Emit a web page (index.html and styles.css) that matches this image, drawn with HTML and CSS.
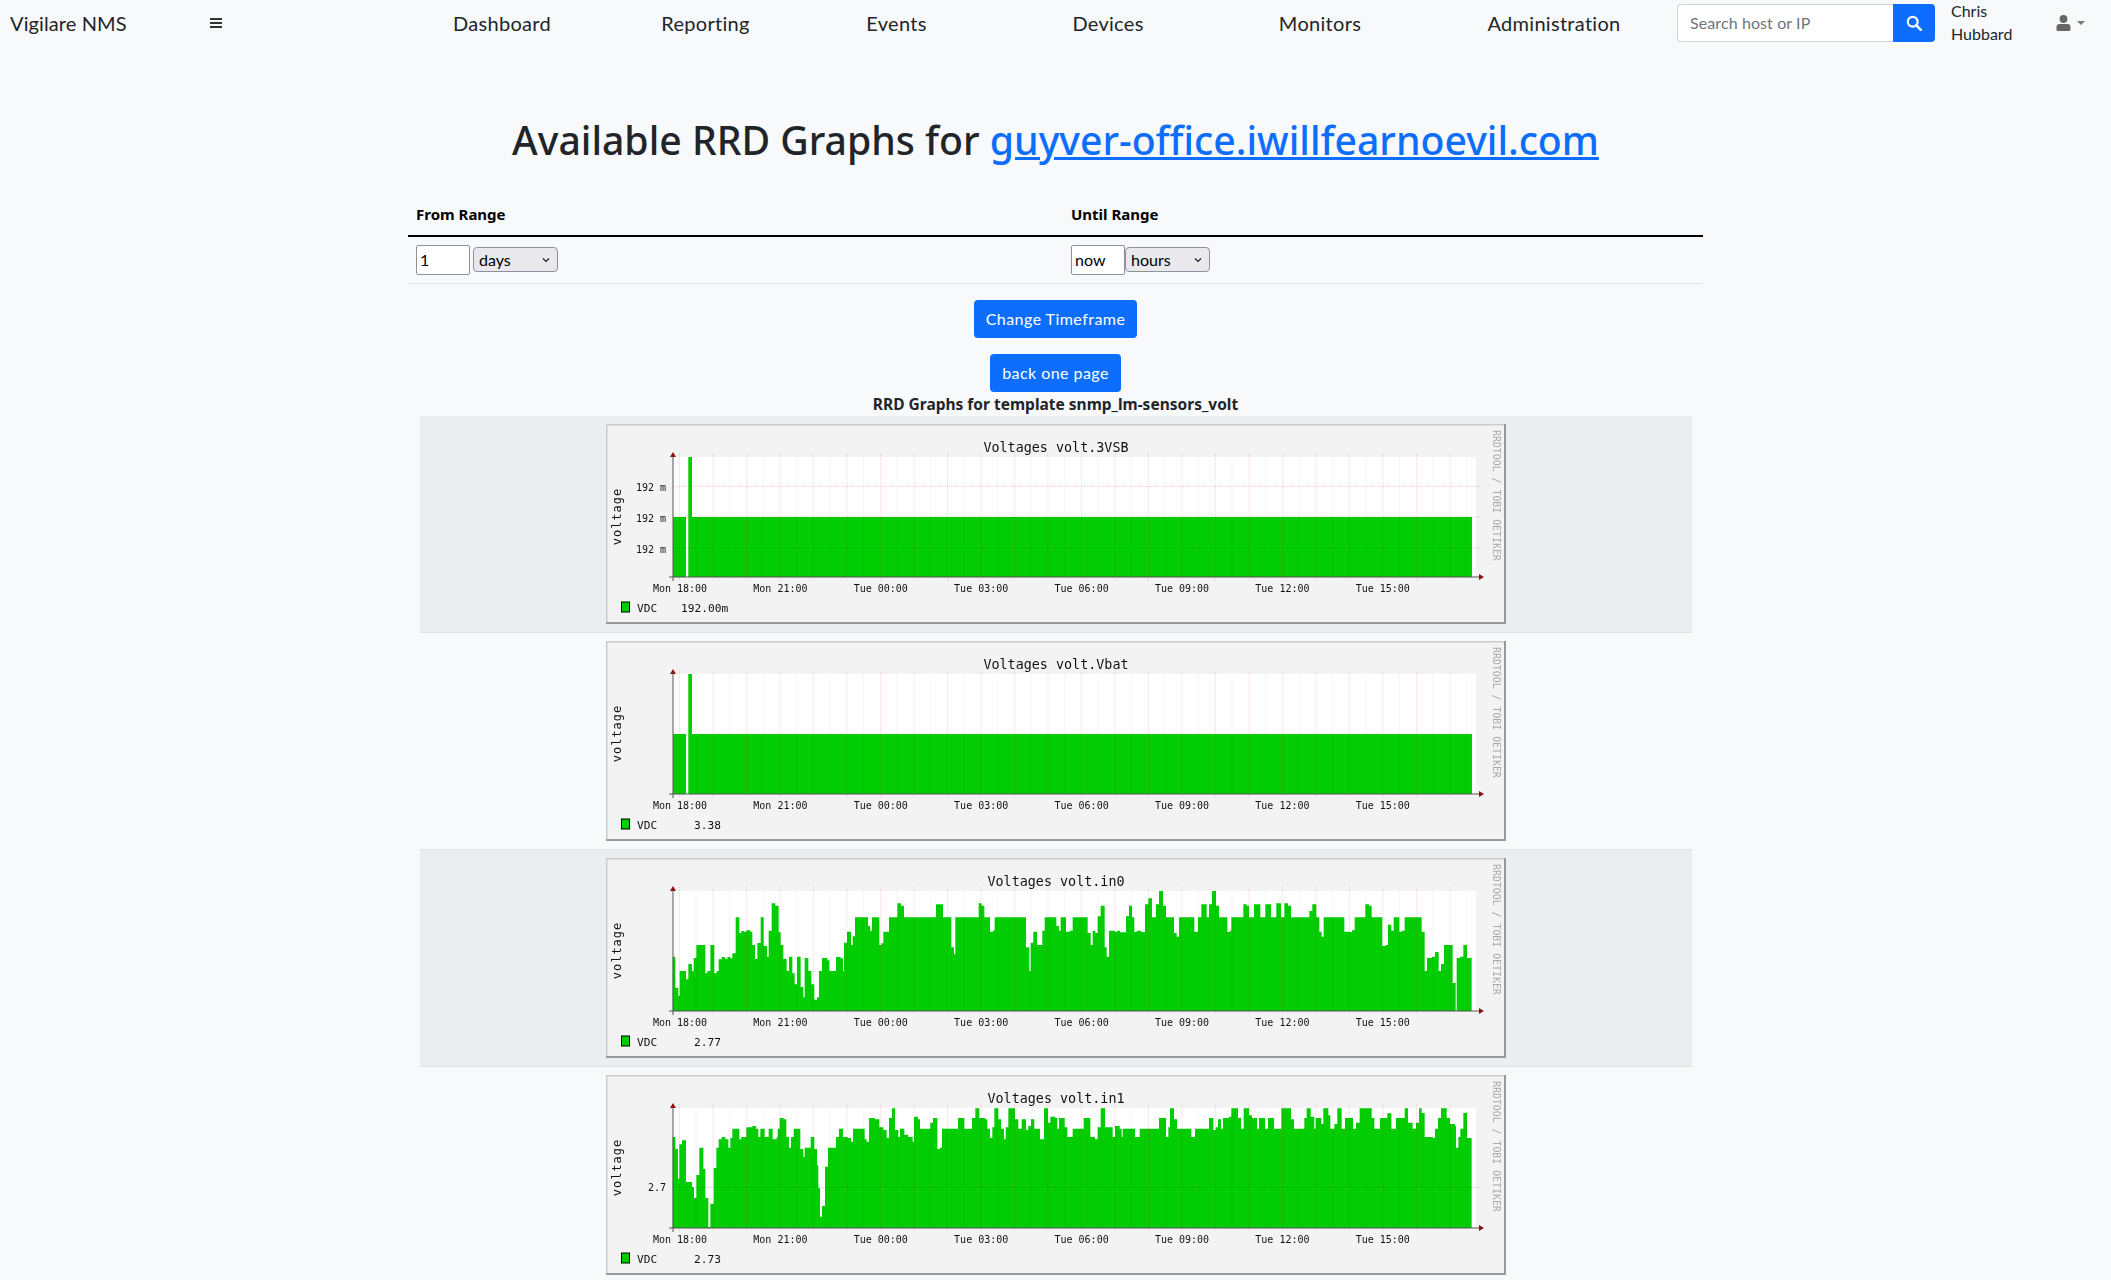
FILE: index.html
```
<!DOCTYPE html>
<html lang="en">
<head>
<meta charset="utf-8">
<title>Vigilare NMS</title>
<link rel="stylesheet" href="styles.css">
</head>
<body>
<svg class="defs" width="0" height="0" aria-hidden="true">
  <defs>
    <g id="chrome">
      <rect width="900" height="200" fill="#f3f3f3"/>
      <path d="M0 0H900V1.5H1.5V200H0Z" fill="#cbcbcb"/>
      <path d="M900 0V200H0V198H898V0Z" fill="#999"/>
      <rect x="67" y="33" width="803" height="120" fill="#fff"/>
    </g>
    <g id="grid">
      <path class="g-minor" d="M90 33v122m33.5-122v122m33.5-122v122m33.5-122v122m33.5-122v122m33.5-122v122m33.5-122v122m33.5-122v122m33.5-122v122m33.5-122v122m33.5-122v122m33.5-122v122m33.5-122v122m33.5-122v122m33.5-122v122m33.5-122v122m33.5-122v122m33.5-122v122m33.5-122v122m33.5-122v122m33.5-122v122m33.5-122v122m33.5-122v122m33.5-122v122"/>
      <path class="g-major" d="M73.5 29v128m33.5-128v128m33.5-128v128m33.5-128v128m33.5-128v128m33.5-128v128m33.5-128v128m33.5-128v128m33.5-128v128m33.5-128v128m33.5-128v128m33.5-128v128m33.5-128v128m33.5-128v128m33.5-128v128m33.5-128v128m33.5-128v128m33.5-128v128m33.5-128v128m33.5-128v128m33.5-128v128m33.5-128v128m33.5-128v128m33.5-128v128"/>
      <path class="axis" d="M67 33V157M63 153H874"/>
      <path class="arrow" d="M64 33L67 28L70 33ZM873 150L878 153L873 156Z"/>
    </g>
  </defs>
</svg>

<nav class="navbar">
  <a class="brand" href="#">Vigilare NMS</a>
  <button class="toggler" type="button" aria-label="Toggle sidebar">
    <svg viewBox="0 0 12 12" width="12" height="12"><path d="M0 1h12v2H0zM0 5h12v2H0zM0 9h12v2H0z" fill="#333"/></svg>
  </button>
  <ul class="menu">
    <li><a href="#">Dashboard</a></li>
    <li><a href="#">Reporting</a></li>
    <li><a href="#">Events</a></li>
    <li><a href="#">Devices</a></li>
    <li><a href="#">Monitors</a></li>
    <li class="menu-last"><a href="#">Administration</a></li>
  </ul>
  <form class="search">
    <input class="search-input" type="text" placeholder="Search host or IP">
    <button class="search-btn" type="button" aria-label="Search">
      <svg viewBox="0 0 16 16" width="16" height="16"><circle cx="6.7" cy="6.7" r="4.9" fill="none" stroke="#fff" stroke-width="2.2"/><path d="M10.4 10.4L14.8 14.8" stroke="#fff" stroke-width="2.6" stroke-linecap="round"/></svg>
    </button>
  </form>
  <span class="username">Chris Hubbard</span>
  <a class="usermenu" href="#" aria-label="User menu">
    <svg viewBox="0 0 14 16" width="15" height="16"><circle cx="7" cy="4" r="3.9" fill="#666"/><path d="M3 9h8a3 3 0 0 1 3 3v2.6a1.4 1.4 0 0 1-1.4 1.4H1.4A1.4 1.4 0 0 1 0 14.600V12a3 3 0 0 1 3-3z" fill="#666"/></svg>
    <span class="caret"></span>
  </a>
</nav>

<main class="content">
  <h1 class="title">Available RRD Graphs for <a href="#">guyver-office.iwillfearnoevil.com</a></h1>

  <table class="range">
    <thead>
      <tr><th class="range-from">From Range</th><th>Until Range</th></tr>
    </thead>
    <tbody>
      <tr>
        <td><input class="num" type="text" value="1"><select class="unit"><option>days</option></select></td>
        <td><input class="num" type="text" value="now"><select class="unit unit-tight"><option>hours</option></select></td>
      </tr>
    </tbody>
  </table>

  <div class="actions"><button class="btn" type="button">Change Timeframe</button></div>
  <div class="actions"><button class="btn" type="button">back one page</button></div>

  <div class="caption">RRD Graphs for template snmp_lm-sensors_volt</div>

  <table class="graphs">
    <tbody>
      <tr><td>
        <svg class="rrd" viewBox="0 0 900 200" width="900" height="200" role="img">
          <use href="#chrome"/>
          <path class="data" d="M67 153V93H80V153H82.300V33H86V93H866V153Z"/>
          <use href="#grid"/>
          <path class="g-h" d="M67 62.300H874M67 93H874M67 124H874"/>
          <text class="t-title" x="450" y="28">Voltages volt.3VSB</text>
          <text class="t-vert" transform="translate(14.500 92.500) rotate(-90)">voltage</text>
          <text class="t-mark" transform="translate(887 6) rotate(90)">RRDTOOL / TOBI OETIKER</text>
          <text class="t-end" x="60" y="66.500">192 m</text>
          <text class="t-end" x="60" y="97.500">192 m</text>
          <text class="t-end" x="60" y="128.500">192 m</text>
          <text class="t-tick" x="74" y="168">Mon 18:00</text>
          <text class="t-tick" x="174.400" y="168">Mon 21:00</text>
          <text class="t-tick" x="274.800" y="168">Tue 00:00</text>
          <text class="t-tick" x="375.200" y="168">Tue 03:00</text>
          <text class="t-tick" x="475.600" y="168">Tue 06:00</text>
          <text class="t-tick" x="576" y="168">Tue 09:00</text>
          <text class="t-tick" x="676.400" y="168">Tue 12:00</text>
          <text class="t-tick" x="776.800" y="168">Tue 15:00</text>
          <rect class="swatch" x="15.500" y="178" width="8" height="10"/>
          <text class="t-legend" x="31" y="188">VDC</text>
          <text class="t-legend" x="75" y="188">192.00m</text>
        </svg>
      </td></tr>
      <tr><td>
        <svg class="rrd" viewBox="0 0 900 200" width="900" height="200" role="img">
          <use href="#chrome"/>
          <path class="data" d="M67 153V93H80V153H82.300V33H86V93H866V153Z"/>
          <use href="#grid"/>
          <text class="t-title" x="450" y="28">Voltages volt.Vbat</text>
          <text class="t-vert" transform="translate(14.500 92.500) rotate(-90)">voltage</text>
          <text class="t-mark" transform="translate(887 6) rotate(90)">RRDTOOL / TOBI OETIKER</text>
          <text class="t-tick" x="74" y="168">Mon 18:00</text>
          <text class="t-tick" x="174.400" y="168">Mon 21:00</text>
          <text class="t-tick" x="274.800" y="168">Tue 00:00</text>
          <text class="t-tick" x="375.200" y="168">Tue 03:00</text>
          <text class="t-tick" x="475.600" y="168">Tue 06:00</text>
          <text class="t-tick" x="576" y="168">Tue 09:00</text>
          <text class="t-tick" x="676.400" y="168">Tue 12:00</text>
          <text class="t-tick" x="776.800" y="168">Tue 15:00</text>
          <rect class="swatch" x="15.500" y="178" width="8" height="10"/>
          <text class="t-legend" x="31" y="188">VDC</text>
          <text class="t-legend" x="88" y="188">3.38</text>
        </svg>
      </td></tr>
      <tr><td>
        <svg class="rrd" viewBox="0 0 900 200" width="900" height="200" role="img">
          <use href="#chrome"/>
          <g class="zoomed-a">
            <path class="data" d="M8 378V215H16V308H25V332H29V258H48V283H55V237H66V258H71V219H79V180H106V265H112V258H121V180H133V265H140V258H146V223H155V216H166V222H172V216H181V220H187V205H197V97H208V144H214V138H222V140H229V136H241V140H247V180H255V222H262V174H272V97H281V183H291V215H296V137H305V55H316V62H326V142H332V180H340V222H350V258H357V215H367V265H374V298H381V215H392V306H400V337H404V219H415V258H424V298H433V344H441V337H447V258H456V219H472V226H478V258H498V216H512V220H519V258H522V173H531V140H543V180H548V154H555V97H594V123H600V137H606V97H628V180H634V175H640V140H657V97H682V55H693V62H702V97H798V58H819V97H844V187H852V208H856V97H926V55H935V62H943V97H960V140H970V136H974V97H1068V187H1078V258H1082V173H1090V140H1101V180H1117V137H1124V97H1159V123H1167V137H1172V97H1188V140H1201V378Z"/>
          </g>
          <g class="zoomed-b">
            <path class="data" d="M0 378V137H8V97H53V144H62V180H68V137H76V144H83V94H92V62H104V187H110V215H117V137H136V141H141V137H150V142H168V94H177V62H186V97H193V141H200V137H214V141H225V58H235V40H246V97H258V58H267V18H279V62H288V97H312V144H320V155H327V97H373V140H384V97H394V58H410V97H417V58H426V18H438V62H447V97H472V141H480V137H484V97H520V58H530V62H537V97H552V58H571V97H586V58H603V97H619V55H633V97H643V55H654V62H663V97H718V78H727V58H739V97H748V140H755V155H761V97H823V140H838V141H846V136H854V97H886V58H897V62H905V97H937V183H947V180H954V119H964V137H971V97H988V140H996V137H1004V97H1055V140H1064V258H1071V219H1085V215H1095V201H1106V258H1113V237H1122V180H1148V294H1157V378H1160V219H1170V215H1180V180H1191V219H1205V378Z"/>
          </g>
          <use href="#grid"/>
          <text class="t-title" x="450" y="28">Voltages volt.in0</text>
          <text class="t-vert" transform="translate(14.500 92.500) rotate(-90)">voltage</text>
          <text class="t-mark" transform="translate(887 6) rotate(90)">RRDTOOL / TOBI OETIKER</text>
          <text class="t-tick" x="74" y="168">Mon 18:00</text>
          <text class="t-tick" x="174.400" y="168">Mon 21:00</text>
          <text class="t-tick" x="274.800" y="168">Tue 00:00</text>
          <text class="t-tick" x="375.200" y="168">Tue 03:00</text>
          <text class="t-tick" x="475.600" y="168">Tue 06:00</text>
          <text class="t-tick" x="576" y="168">Tue 09:00</text>
          <text class="t-tick" x="676.400" y="168">Tue 12:00</text>
          <text class="t-tick" x="776.800" y="168">Tue 15:00</text>
          <rect class="swatch" x="15.500" y="178" width="8" height="10"/>
          <text class="t-legend" x="31" y="188">VDC</text>
          <text class="t-legend" x="88" y="188">2.77</text>
        </svg>
      </td></tr>
      <tr><td>
        <svg class="rrd" viewBox="0 0 900 200" width="900" height="200" role="img">
          <use href="#chrome"/>
          <g class="zoomed-a">
            <path class="data" d="M8 378V105H16V141H24V230H28V127H36V115H48V240H66V255H72V288H79V219H88V137H100V201H106V288H115V375H121V305H131V198H139V137H146V112H155V105H166V112H175V137H181V108H187V80H208V112H214V105H229V76H247V72H258V80H265V105H271V80H284V105H296V80H308V112H320V105H323V80H329V48H341V52H349V105H357V137H363V105H371V80H391V141H400V165H404V137H422V105H433V141H441V190H445V258H450V344H456V312H465V194H474V137H498V105H507V80H519V105H533V108H543V119H549V80H584V112H590V119H597V48H615V52H628V76H640V84H650V108H657V48H666V19H675V84H685V105H690V80H703V98H715V105H728V119H732V44H744V52H750V80H781V62H789V48H802V141H810V137H816V80H864V48H883V80H906V48H916V19H928V48H945V52H952V80H960V108H967V76H973V19H985V52H993V80H1002V112H1007V76H1015V19H1035V52H1045V80H1055V52H1068V84H1075V72H1083V52H1093V80H1110V112H1122V19H1134V62H1141V44H1156V48H1162V80H1167V48H1184V76H1192V105H1201V378Z"/>
          </g>
          <g class="zoomed-b">
            <path class="data" d="M0 378V105H8V80H41V48H61V105H75V112H83V76H92V19H105V76H128V105H135V72H149V80H155V105H158V80H195V105H209V80H267V48H288V105H295V76H300V19H312V52H321V80H364V105H375V80H417V48H430V84H437V76H444V52H453V80H459V48H477V44H484V19H504V48H513V80H521V19H537V40H546V48H561V80H567V48H585V80H594V48H612V80H634V19H663V52H672V80H703V48H710V19H722V44H733V80H737V48H754V66H760V19H775V40H781V80H793V66H802V19H815V80H825V48H849V80H858V62H869V19H905V48H913V80H930V48H952V34H964V80H978V48H1004V19H1014V62H1028V80H1038V62H1047V19H1055V33H1064V105H1088V108H1095V80H1104V48H1113V19H1130V48H1140V66H1155V72H1158V137H1165V105H1171V80H1180V33H1191V108H1205V378Z"/>
          </g>
          <use href="#grid"/>
          <path class="g-h" d="M67 112.300H874"/>
          <text class="t-title" x="450" y="28">Voltages volt.in1</text>
          <text class="t-vert" transform="translate(14.500 92.500) rotate(-90)">voltage</text>
          <text class="t-mark" transform="translate(887 6) rotate(90)">RRDTOOL / TOBI OETIKER</text>
          <text class="t-end" x="60" y="116">2.7</text>
          <text class="t-tick" x="74" y="168">Mon 18:00</text>
          <text class="t-tick" x="174.400" y="168">Mon 21:00</text>
          <text class="t-tick" x="274.800" y="168">Tue 00:00</text>
          <text class="t-tick" x="375.200" y="168">Tue 03:00</text>
          <text class="t-tick" x="475.600" y="168">Tue 06:00</text>
          <text class="t-tick" x="576" y="168">Tue 09:00</text>
          <text class="t-tick" x="676.400" y="168">Tue 12:00</text>
          <text class="t-tick" x="776.800" y="168">Tue 15:00</text>
          <rect class="swatch" x="15.500" y="178" width="8" height="10"/>
          <text class="t-legend" x="31" y="188">VDC</text>
          <text class="t-legend" x="88" y="188">2.73</text>
        </svg>
      </td></tr>
    </tbody>
  </table>
</main>
</body>
</html>
```

FILE: styles.css
```
* { box-sizing: border-box; }

html, body {
  margin: 0;
  height: 100%;
  overflow: hidden;
}

body {
  background: #f8f9fa;
  color: #212529;
  font-family: "Lato", "Noto Sans", sans-serif;
  font-size: 16px;
  line-height: 24px;
}

a { color: inherit; text-decoration: none; }

.defs { position: absolute; }

/* navbar */
.navbar {
  display: flex;
  align-items: center;
  height: 46px;
  padding-left: 10px;
  font-size: 20px;
}

.brand { width: 200px; flex: none; letter-spacing: .1px; }

.toggler {
  flex: none;
  width: 12px;
  height: 12px;
  margin: 0 178px 0 0;
  padding: 0;
  border: 0;
  background: none;
  display: flex;
}

.menu {
  flex: none;
  display: grid;
  grid-template-columns: 204px 203px 179px 244px 180px 257px;
  margin: 0;
  padding: 0;
  list-style: none;
  text-align: center;
  letter-spacing: .3px;
}

.menu-last { padding-left: 31px; }

.search {
  flex: none;
  display: flex;
  width: 258px;
  height: 38px;
  margin-left: 10px;
  margin-top: -1px;
}

.search-input {
  flex: 1;
  min-width: 0;
  padding: 0 12px;
  border: 1px solid #ced4da;
  border-right: 0;
  border-radius: 4px 0 0 4px;
  background: #fff;
  font: inherit;
  font-size: 16px;
  letter-spacing: .1px;
}

.search-input::placeholder { color: #6c757d; }

.search-btn {
  flex: none;
  width: 42px;
  display: flex;
  align-items: center;
  justify-content: center;
  padding: 0;
  border: 0;
  border-radius: 0 4px 4px 0;
  background: #0d6efd;
}

.username {
  flex: none;
  width: 70px;
  margin-left: 16px;
  margin-top: -2px;
  font-size: 16px;
  line-height: 23px;
}

.usermenu {
  flex: none;
  display: flex;
  align-items: center;
  gap: 6px;
  margin-left: 35px;
}

.caret {
  width: 0;
  height: 0;
  border: 4px solid transparent;
  border-top-color: #777;
  border-bottom: 0;
}

/* heading */
.title {
  margin: 0;
  padding-top: 70px;
  height: 152px;
  font-family: "Noto Sans", sans-serif;
  font-size: 39.200px;
  line-height: 48px;
  font-weight: 500;
  text-align: center;
}

.title a { color: #0d6efd; text-decoration: underline; }

/* range table */
.range {
  width: 1295px;
  margin: 0 auto;
  border-collapse: collapse;
  color: #000;
}

.range th {
  height: 38px;
  padding: 0 8px 6px;
  border-bottom: 2px solid #000;
  text-align: left;
  font-family: "Noto Sans", sans-serif;
  font-weight: 700;
  font-size: 15px;
}

.range-from { width: 655px; }

.range td {
  height: 47px;
  padding: 0 8px;
  border-bottom: 1px solid #dee2e6;
}

.range td > * { vertical-align: middle; }

.num {
  width: 54px;
  height: 30px;
  padding: 1px 3px;
  border: 1px solid #8f8f9d;
  border-radius: 2px;
  background: #fff;
  font: inherit;
  color: #000;
}

.unit {
  appearance: none;
  width: 85px;
  height: 25px;
  margin-left: 3px;
  padding: 0 0 0 5px;
  border: 1px solid #8f8f9d;
  border-radius: 4px;
  background: #e9e9ed url("data:image/svg+xml,%3Csvg xmlns='http://www.w3.org/2000/svg' width='8' height='6'%3E%3Cpath d='M1 1.500L4 4.500L7 1.500' fill='none' stroke='%23222' stroke-width='1.200'/%3E%3C/svg%3E") no-repeat right 7px center;
  font: inherit;
  color: #000;
}

.unit-tight { margin-left: 0; }

/* actions */
.actions {
  display: flex;
  justify-content: center;
  margin-top: 16px;
}

.btn {
  height: 38px;
  padding: 0 12px;
  border: 0;
  border-radius: 4px;
  background: #0d6efd;
  color: #fff;
  font: inherit;
  letter-spacing: .45px;
}

.caption {
  height: 24px;
  font-family: "Noto Sans", sans-serif;
  font-size: 15.500px;
  font-weight: 700;
  text-align: center;
  color: #212529;
}

/* graphs */
.graphs {
  width: 1272px;
  margin: 0 auto;
  border-collapse: collapse;
}

.graphs td {
  padding: 8px;
  border-bottom: 1px solid #dee2e6;
  text-align: center;
}

.graphs tr:nth-child(odd) td { background: #ecedee; }

.rrd { display: block; margin: 0 auto; filter: blur(.3px); }

.rrd text {
  font-family: "DejaVu Sans Mono", monospace;
  fill: #111;
}

.data { fill: #02cc02; }

.zoomed-a { transform: translate(64px, 27px) scale(.33333); }
.zoomed-b { transform: translate(464px, 27px) scale(.33333); }

.g-minor { fill: none; stroke: #000; stroke-opacity: .07; stroke-dasharray: 1 1; }
.g-major { fill: none; stroke: #f00; stroke-opacity: .18; stroke-dasharray: 1 1; }
.g-h { fill: none; stroke: #f00; stroke-opacity: .24; stroke-dasharray: 1 1; }
.axis { fill: none; stroke: #555; stroke-width: 1; }
.arrow { fill: #8a1414; }

.rrd .t-title { font-size: 13.4px; text-anchor: middle; }
.rrd .t-vert { font-size: 12px; letter-spacing: 1px; text-anchor: middle; }
.rrd .t-mark { font-size: 9.900px; fill: #aaa; }
.rrd .t-end { font-size: 10px; text-anchor: end; }
.rrd .t-tick { font-size: 10px; text-anchor: middle; }
.rrd .t-legend { font-size: 11.200px; }
.swatch { fill: #02cc02; stroke: #000; stroke-width: 1; }
```
